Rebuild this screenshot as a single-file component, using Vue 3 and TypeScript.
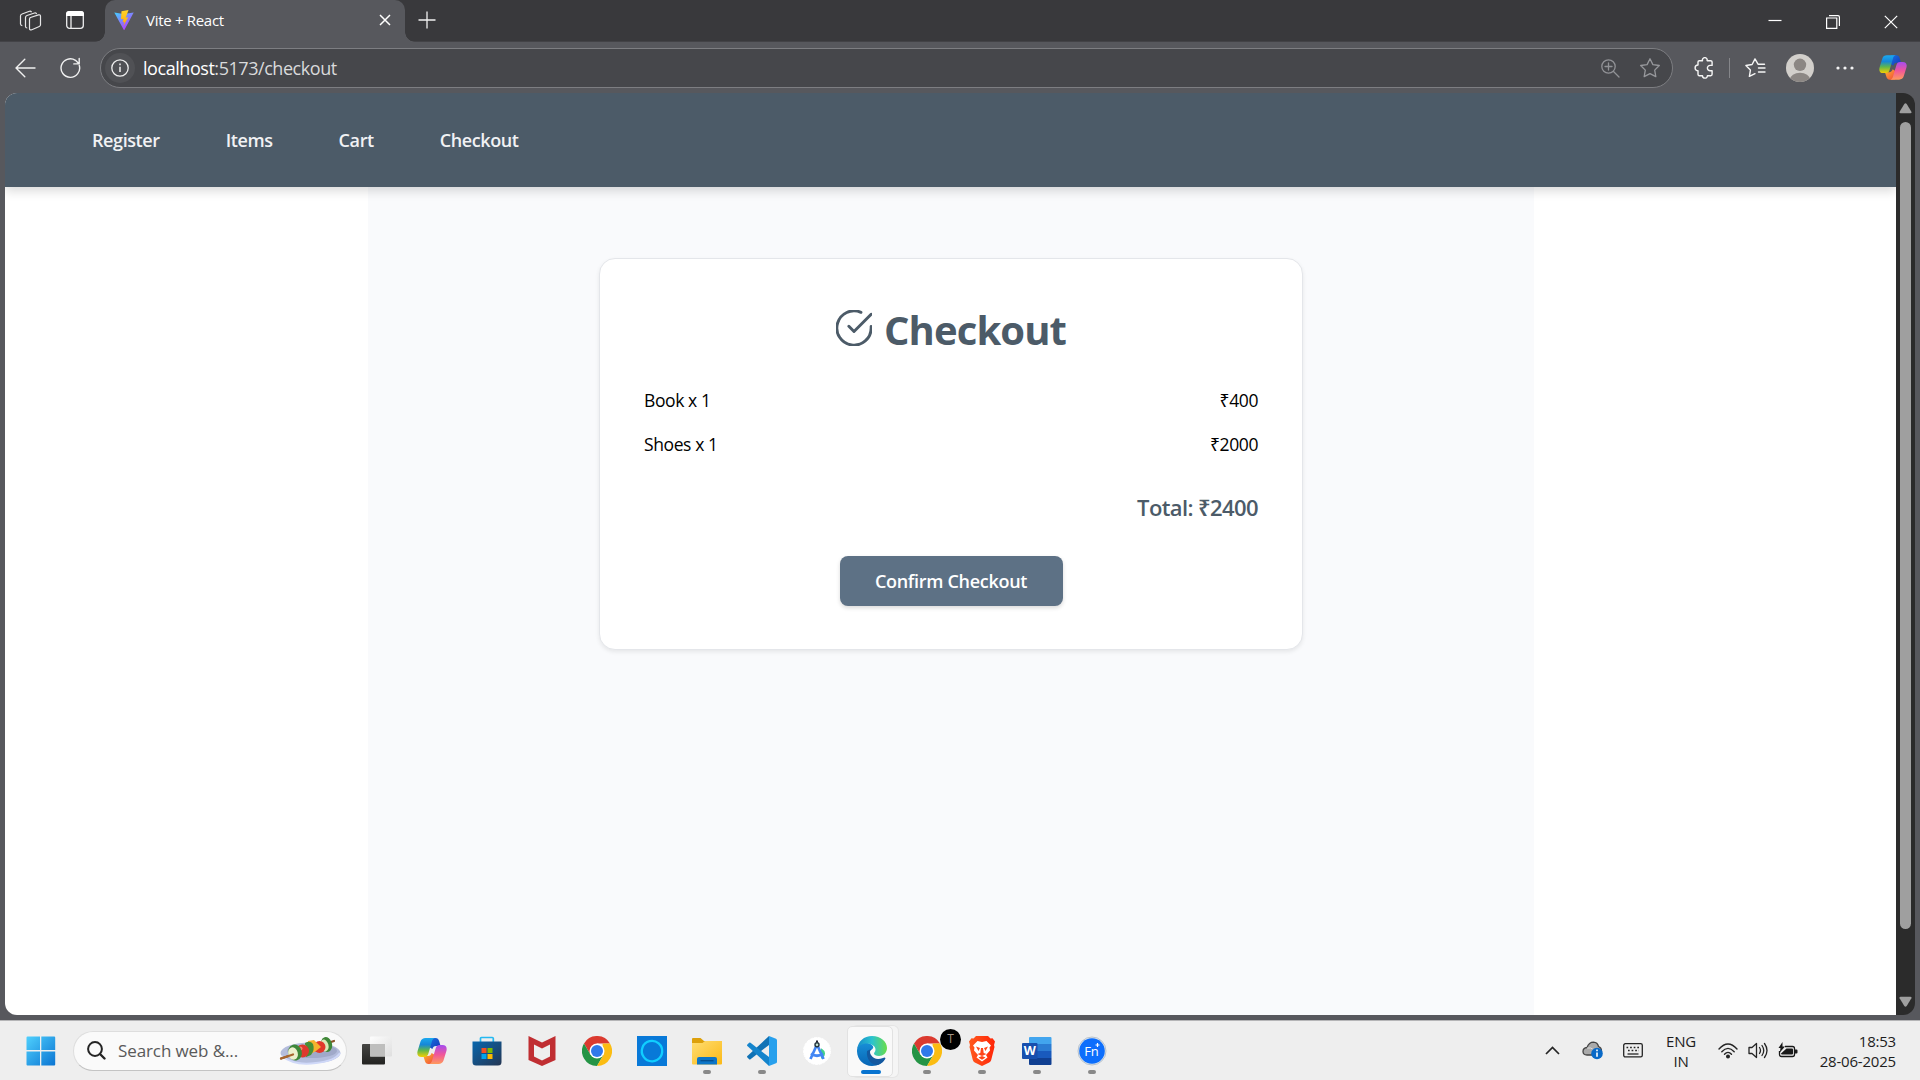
<script setup lang="ts">
interface LineItem {
  name: string
  quantity: number
  price: number
}

const links: string[] = ['Register', 'Items', 'Cart', 'Checkout']
const items: LineItem[] = [
  { name: 'Book', quantity: 1, price: 400 },
  { name: 'Shoes', quantity: 1, price: 2000 },
]
const total = items.reduce((sum, item) => sum + item.price * item.quantity, 0)
</script>

<template>
  <div class="desktop">
    <svg class="defs" width="0" height="0" aria-hidden="true">
      <defs>
        <linearGradient id="cpA" x1="0" y1="0" x2="0" y2="1">
          <stop offset="0" stop-color="#1ba9ef" /><stop offset=".35" stop-color="#1687d8" />
          <stop offset=".65" stop-color="#5fb74c" /><stop offset="1" stop-color="#f6d000" />
        </linearGradient>
        <linearGradient id="cpB" x1="0" y1="0" x2="0" y2="1">
          <stop offset="0" stop-color="#a44cf0" /><stop offset=".5" stop-color="#f0569b" />
          <stop offset="1" stop-color="#ff9a5c" />
        </linearGradient>
        <linearGradient id="cpC" x1="0" y1="0" x2="1" y2="1">
          <stop offset="0" stop-color="#1a6fe0" /><stop offset="1" stop-color="#1438b8" />
        </linearGradient>
        <linearGradient id="cpD" x1="0" y1="0" x2="1" y2="1">
          <stop offset="0" stop-color="#ffb62e" /><stop offset="1" stop-color="#f0453c" />
        </linearGradient>
        <symbol id="copilot" viewBox="0 0 30 28">
          <path fill="url(#cpC)" d="M13 1h5.5c2 0 3 1 3.600 3l1.500 5H19c-2 0-3 1-3.600 3L12 10z" />
          <path fill="url(#cpD)" d="M17 27h-5.500c-2 0-3-1-3.600-3l-1.500-5H11c2 0 3-1 3.600-3l3.400 2z" />
          <path fill="url(#cpA)" d="M8.500 1H18c-1.800.3-2.600 1.700-3.100 3.500l-3.500 12c-.6 2.200-1.800 3.500-4 3.500H4.500C1 20-.3 17.500.6 14L3.500 4.500C4.300 2.200 6 1 8.500 1z" />
          <path fill="url(#cpB)" d="M21.500 27H12c1.800-.3 2.600-1.700 3.100-3.500l3.500-12c.6-2.200 1.800-3.500 4-3.500h2.900c3.500 0 4.800 2.500 3.900 6l-2.900 9.500c-.8 2.300-2.500 3.500-5 3.500z" />
        </symbol>
        <symbol id="chrome" viewBox="0 0 30 30">
          <path fill="#db3a2f" d="M2 7.500A15 15 0 0 1 28 7.500H15L8.500 18.700z" />
          <path fill="#249445" d="M2 7.500A15 15 0 0 0 15 30l6.500-11.200-13 0z" />
          <path fill="#fbbc12" d="M28 7.500A15 15 0 0 1 15 30l6.500-11.200L20.500 7.500z" />
          <circle cx="15" cy="15" r="7.500" fill="#fff" /><circle cx="15" cy="15" r="6" fill="#3079ea" />
        </symbol>
      </defs>
    </svg>

    <header class="browser">
      <div class="tabstrip">
        <svg class="workspaces" width="23" height="22" viewBox="0 0 23 22" fill="none" stroke="#e6e6e7" stroke-width="1.200" stroke-linejoin="round">
          <path d="M11.500 7.500l8-2.600q2-.5 2 1.300v8.600q0 1.200-1.200 1.700l-7.500 3.200q-2.300.8-2.300-1.300V9.200q0-1.300 1-1.700z" />
          <path d="M17.500 4.200q-.3-1.800-2-1.200L8 5.500q-1.500.6-1.500 2v9q.1 1.500 1.800 1.500" />
          <path d="M12.500 2.200Q12 .7 10.500 1.200L3 4Q1.500 4.500 1.500 6v8q.1 1.500 1.800 1.700" />
        </svg>
        <svg class="tab-actions" width="18" height="18" viewBox="0 0 18 18" fill="none" stroke="#eeeeef" stroke-width="1.300">
          <rect x=".7" y=".7" width="16.600" height="16.600" rx="2.800" /><path fill="#fff" stroke="none" d="M0 5V3Q0 0 3 0h12q3 0 3 3v2z" /><path d="M5 5v12" />
        </svg>
        <div class="tab">
          <svg width="20" height="20" viewBox="0 0 20 20">
            <defs>
              <linearGradient id="viteA" x1="0" y1="0" x2=".7" y2="1"><stop offset="0" stop-color="#41d1ff" /><stop offset="1" stop-color="#bd34fe" /></linearGradient>
              <linearGradient id="viteB" x1="0" y1="0" x2="0" y2="1"><stop offset="0" stop-color="#ffd42e" /><stop offset="1" stop-color="#ffa800" /></linearGradient>
            </defs>
            <path fill="url(#viteA)" d="M.3 2.500L9.500 4l10.200-1.500L10.500 19.700q-.4.500-.8 0z" />
            <path fill="url(#viteB)" d="M14.500 0L7.500 1.300 7 9.200l2.400-.5-.7 3.600 1.700-.5-1 4.200 4.800-8.700-2.500.4z" />
          </svg>
          <span class="tab-title">Vite + React</span>
          <svg class="tab-close" width="12" height="12" viewBox="0 0 12 12" stroke="#fff" stroke-width="1.500"><path d="M1 1l10 10M11 1L1 11" /></svg>
        </div>
        <svg class="new-tab" width="18" height="18" viewBox="0 0 18 18" stroke="#f1f1f1" stroke-width="1.300"><path d="M9 .5v17M.5 9h17" /></svg>
        <div class="window-controls">
          <svg viewBox="0 0 14 14"><path d="M.5 5.500h13" /></svg>
          <svg viewBox="0 0 14 14"><path d="M.6 3h10.200v10.400H.6zM3 .6h9q1.400 0 1.400 1.400v9" /></svg>
          <svg viewBox="0 0 14 14"><path d="M.8.800l12.400 12.400M13.200.800L.8 13.200" /></svg>
        </div>
      </div>

      <div class="toolbar">
        <svg class="back" width="21" height="20" viewBox="0 0 21 20" fill="none" stroke="#f0f0f0" stroke-width="1.400" stroke-linecap="round" stroke-linejoin="round"><path d="M20 10H1.200M9.800 1.300L1 10l8.800 8.700" /></svg>
        <svg class="reload" width="21" height="22" viewBox="0 0 21 22" fill="none" stroke="#f0f0f0" stroke-width="1.400" stroke-linecap="round" stroke-linejoin="round"><path d="M19.300 8.500A9.300 9.300 0 1 1 15.500 3.300L19 6.700M19.200 1.500v5.400h-5.400" /></svg>
        <div class="address">
          <span class="site-info">
            <svg width="18" height="18" viewBox="0 0 18 18" fill="none" stroke="#eee" stroke-width="1.300"><circle cx="9" cy="9" r="8.200" /><path stroke-width="1.500" d="M9 7.700v5.300M9 4.600v1.600" /></svg>
          </span>
          <span class="url"><b>localhost</b>:5173/checkout</span>
          <svg class="zoom-icon" width="19" height="19" viewBox="0 0 19 19" fill="none" stroke="#919296" stroke-width="1.300" stroke-linecap="round"><circle cx="7.500" cy="7.500" r="6.700" /><path d="M12.500 12.500l5.500 5.500M7.500 4v7M4 7.500h7" /></svg>
          <svg class="star" width="20" height="20" viewBox="0 0 20 20" fill="none" stroke="#97989c" stroke-width="1.300" stroke-linejoin="round"><path d="M10 .8l2.900 5.800 6.400.9-4.600 4.600 1.100 6.500L10 15.600l-5.800 3 1.100-6.500L.7 7.500l6.400-.9z" /></svg>
        </div>
        <svg class="puzzle" width="20" height="22" viewBox="0 0 20 22" fill="none" stroke="#f5f5f5" stroke-width="1.400" stroke-linejoin="round"><path d="M4 8V5q0-1.300 1.300-1.300h3.200a2.400 2.400 0 1 1 4.600 0h3.600q1.400 0 1.400 1.400v3.300h-1.500a2.700 2.700 0 1 0 0 5.300h1.500v3.600q0 1.400-1.400 1.400h-3.300a2.400 2.400 0 1 1-4.900 0H5.300Q4 18.700 4 17.300v-3.500a2.900 2.900 0 1 1 0-5.800z" /></svg>
        <i class="divider"></i>
        <svg class="favorites" width="21" height="20" viewBox="0 0 21 20" fill="none" stroke="#f5f5f5" stroke-width="1.400" stroke-linecap="round" stroke-linejoin="round"><path d="M19.500 6.200H13L10 .9 7.100 6.500.9 7.500l4.500 4.600-1 6.300 5.600-2.700M13.500 10h6.500M13.500 14h6.500" /></svg>
        <svg class="avatar" width="28" height="28" viewBox="0 0 28 28"><defs><clipPath id="face"><circle cx="14" cy="14" r="14" /></clipPath></defs><g clip-path="url(#face)"><path fill="#d2cfcb" d="M0 0h28v28H0z" /><circle cx="14" cy="10.800" r="6.200" fill="#8c8784" /><ellipse cx="14" cy="25.500" rx="10" ry="6.800" fill="#8c8784" /></g></svg>
        <svg class="dots" width="18" height="4" viewBox="0 0 18 4" fill="#f4f4f4"><circle cx="2" cy="2" r="1.600" /><circle cx="9" cy="2" r="1.600" /><circle cx="16" cy="2" r="1.600" /></svg>
        <svg class="copilot-button" width="28" height="27"><use href="#copilot" /></svg>
      </div>
    </header>

    <main class="frame">
      <div class="viewport">
        <nav class="nav">
          <a v-for="link in links" :key="link">{{ link }}</a>
        </nav>
        <div class="container">
          <section class="card">
            <h1>
              <svg width="36" height="36" viewBox="1.500 1.500 21 21" fill="none" stroke="currentColor" stroke-width="1.700" stroke-linecap="round" stroke-linejoin="round"><path d="M22 11.080V12a10 10 0 1 1-5.930-9.140" /><path d="M22 4L12 14.010l-3-3" /></svg>
              <span>Checkout</span>
            </h1>
            <ul>
              <li v-for="item in items" :key="item.name">
                <span>{{ item.name }} x {{ item.quantity }}</span>
                <span class="price">₹{{ item.price * item.quantity }}</span>
              </li>
            </ul>
            <p class="total">Total: ₹{{ total }}</p>
            <button type="button">Confirm Checkout</button>
          </section>
        </div>
      </div>
      <div class="scrollbar">
        <svg width="13" height="11" viewBox="0 0 13 11"><path d="M5.300.9q1.200-1.300 2.400 0l4.700 7.800q.6 1.500-1 1.500H1.600q-1.600 0-1-1.500z" /></svg>
        <i></i>
        <svg width="13" height="11" viewBox="0 0 13 11"><path d="M5.300 10.100q1.200 1.300 2.400 0l4.700-7.800q.6-1.500-1-1.500H1.600q-1.600 0-1 1.500z" /></svg>
      </div>
    </main>

    <footer class="taskbar">
      <svg class="start" width="30" height="30" viewBox="0 0 30 30">
        <defs><linearGradient id="win" x1="0" y1="0" x2="1" y2="1" gradientUnits="objectBoundingBox"><stop offset="0" stop-color="#4fd0fd" /><stop offset="1" stop-color="#0a74d2" /></linearGradient></defs>
        <path fill="url(#win)" d="M.5 1.500q0-1 1-1H14V14H.5zM15.300.500h12.900q1 0 1 1V14H15.300zM.5 15.500H14v14H1.500q-1 0-1-1zM15.300 15.500h13.900v13q0 1-1 1H15.300z" />
      </svg>
      <div class="search">
        <svg width="19" height="19" viewBox="0 0 19 19" fill="none" stroke="#252525" stroke-width="2"><circle cx="8" cy="8" r="6.900" /><path stroke-width="2.400" stroke-linecap="round" d="M13 13l4.500 4.500" /></svg>
        <span>Search web &amp;...</span>
        <svg class="skewer" width="62" height="30" viewBox="0 0 62 30">
          <ellipse cx="31.500" cy="17" rx="30" ry="10.500" fill="#b4bddc" /><ellipse cx="33" cy="15" rx="25" ry="7" fill="#a0a9c9" /><path d="M3 20q12 10 34 7 19-2 24-10" fill="none" stroke="#cfd8f8" stroke-width="2" />
          <path d="M2 22.500L55 5" stroke="#8c5328" stroke-width="2.200" stroke-linecap="round" />
          <ellipse cx="47.500" cy="8.500" rx="5.500" ry="7.500" transform="rotate(-15 47.500 8.500)" fill="#3f8738" /><ellipse cx="45.500" cy="9.500" rx="4" ry="6" transform="rotate(-15 45.500 9.500)" fill="#dde8b7" />
          <circle cx="40.500" cy="11" r="6" fill="#e2382b" />
          <path d="M29 5l6-1 7 7-5 4-7 4z" fill="#f6b22d" /><path d="M26 7q5-3 8 1 2 6-2 11l-5 2z" fill="#468f36" /><path d="M26 9q4 4 1 10l-4 1z" fill="#e6e4aa" />
          <circle cx="23.500" cy="15" r="6.500" fill="#de392d" /><circle cx="21.500" cy="12.500" r="2" fill="#f3836f" />
          <ellipse cx="16" cy="16.500" rx="6.800" ry="8" transform="rotate(-15 16 16.500)" fill="#3e8839" /><ellipse cx="14" cy="17.500" rx="4.800" ry="6.300" transform="rotate(-15 14 17.500)" fill="#edf0cd" />
          <path d="M2 22.500L14 18.500" stroke="#a8662f" stroke-width="2.200" stroke-linecap="round" />
        </svg>
      </div>

      <div class="apps">
        <span class="app">
          <svg width="30" height="30" viewBox="0 0 30 30"><defs><linearGradient id="tvA" x2="0" y2="1"><stop stop-color="#454543" /><stop offset="1" stop-color="#222220" /></linearGradient><linearGradient id="tvB" x2="1" y2="1"><stop stop-color="#fff" stop-opacity=".9" /><stop offset="1" stop-color="#ddd" stop-opacity=".9" /></linearGradient></defs><rect y="8" width="23" height="20.500" rx="1" fill="url(#tvA)" /><rect x="8" y=".5" width="22" height="20" rx="1" fill="url(#tvB)" /><path fill="#bebebd" d="M8 8h15v12.500H8z" /></svg>
        </span>
        <span class="app"><svg width="30" height="28"><use href="#copilot" /></svg></span>
        <span class="app">
          <svg width="30" height="30" viewBox="0 0 30 30"><defs><linearGradient id="store" x1="0" y1="0" x2="1" y2="1"><stop stop-color="#0867ae" /><stop offset="1" stop-color="#253653" /></linearGradient></defs><path fill="none" stroke="#25b9f1" stroke-width="1.700" d="M8.500 6V2.500q0-1 1-1h10.800q1 0 1 1V6" /><path fill="url(#store)" d="M.5 5.500h29V26q0 3.500-3.500 3.500H4Q.5 29.500.5 26z" /><path fill="#f25022" d="M9.500 12h5v5h-5z" /><path fill="#7fba00" d="M15.500 12h5v5h-5z" /><path fill="#00a4ef" d="M9.500 18h5v5h-5z" /><path fill="#ffb900" d="M15.500 18h5v5h-5z" /></svg>
        </span>
        <span class="app"><svg width="30" height="30" viewBox="0 0 30 30"><path fill="#c02e32" fill-rule="evenodd" d="M1.500 0L15 6.500 28.500 0v24L15 30 1.500 24zM7 8.500v12L15 24.500l8-4v-12l-8 4z" /></svg></span>
        <span class="app"><svg width="30" height="30"><use href="#chrome" /></svg></span>
        <span class="app"><svg width="30" height="30" viewBox="0 0 30 30"><path fill="#0879d8" d="M0 0h30v30H0z" /><path d="M15 25.300a10.200 10.200 0 1 1 5-1.300q-2.500 1.500-5 1.300z" fill="none" stroke="#10ceff" stroke-width="2.300" /></svg></span>
        <span class="app running">
          <svg width="30" height="30" viewBox="0 0 30 30"><defs><linearGradient id="fold" x2="1" y2="1"><stop stop-color="#ffdd72" /><stop offset="1" stop-color="#fbb916" /></linearGradient></defs><path fill="#dda00b" d="M0 10V3q0-1 1-1h7.500l3.500 3h17q1 0 1 1v4z" /><path fill="url(#fold)" d="M0 7h10.500l2.500-2H30v22.500q0 1-1 1H1q-1 0-1-1z" /><path fill="#0c75c7" d="M5 28.500V23q0-2 2-2h16q2 0 2 2v5.500z" /><path stroke="#064d8e" stroke-width="1.300" d="M8.500 24.700h13" /></svg>
        </span>
        <span class="app running">
          <svg width="30" height="30" viewBox="0 0 30 30"><path fill="#1072b5" d="M22 0v9L3.500 23.200q-.7.500-1.400 0L.4 21.600q-.8-.8 0-1.600z" /><path fill="#1484cc" d="M22 30v-9L3.500 6.800q-.7-.5-1.400 0L.4 8.400q-.8.800 0 1.600z" /><path fill="#27a0ed" d="M22 0l7 2.800q1 .5 1 1.500v21.400q0 1-1 1.500L22 30z" /></svg>
        </span>
        <span class="app">
          <svg width="30" height="30" viewBox="0 0 30 30"><circle cx="15" cy="15" r="13.500" fill="#fff" stroke="#fff" stroke-dasharray="3 1" /><path d="M20 14a4 4 0 0 1 0 7z" fill="#42d18a" stroke="#42d18a" stroke-width="2" /><path d="M15 8.500L8.500 23M15 8.500L21.500 23M9 17.500q6 4.500 12 0" fill="none" stroke="#4286f4" stroke-width="2.700" /><path d="M15 4.500v2" stroke="#223" stroke-width="2" /><circle cx="15" cy="8.800" r="2" fill="#c8e6d5" stroke="#24333d" stroke-width="1.400" /></svg>
        </span>
        <span class="app active">
          <svg width="30" height="30" viewBox="0 0 30 30"><defs><linearGradient id="edA" x1="0" y1=".5" x2="1" y2=".5"><stop stop-color="#168acb" /><stop offset=".5" stop-color="#2bc3cf" /><stop offset="1" stop-color="#69dd49" /></linearGradient><linearGradient id="edB" x2="0" y2="1"><stop stop-color="#188fd7" /><stop offset="1" stop-color="#0865b5" /></linearGradient></defs><path fill="url(#edB)" d="M0 14C1 6 10 5 15 9c3 3 0 4-2 6-2 4 0 9 5 10 4 1 7 0 10-3-2 5-7 8-13 8C6 30-.4 23 0 14z" /><path fill="url(#edA)" d="M0 14C1 5 7 0 15 0c9 0 15 6 15 12 0 5-4 8-8 8-3 0-5-1-5-2.500 0-1 1.500-1.500 1.500-4C18.500 10 14 7.500 10 7.500 5 7.500 1 10 0 14z" /><path fill="#1459a0" d="M10 15c-1 8 4 14 11 14q5-2 7.500-6.500Q28 21 26 22q-8 3-12-3-2-3 0-6z" /></svg>
        </span>
        <span class="app running profile">
          <svg width="30" height="30"><use href="#chrome" /></svg><b>T</b>
        </span>
        <span class="app running">
          <svg width="26" height="30" viewBox="0 0 26 30"><defs><linearGradient id="brave" x2="1"><stop stop-color="#ff5a1e" /><stop offset="1" stop-color="#ff2508" /></linearGradient></defs><path fill="url(#brave)" d="M7 0h12l2.500 2.500 2-.3L26 5.500 25 9l.5 2-3.300 13q-.5 1.500-2 2.500L13 30l-7.200-3.500q-1.500-1-2-2.500L.5 11 1 9 0 5.500l2.500-3.300 2 .3z" /><path fill="#fff" d="M8.500 5l4.500 1 4.500-1L22 9.500l-1.500 2 .5 3-4 4.500 1.500 2.500L13 25.500 7.500 21.500 9 19l-4-4.500.5-3L4 9.500z" /><path fill="#ff451a" d="M7 10.500l4 1.500-1.500 3zM19 10.500L15 12l1.500 3zM12 12h2l.7 5 2.800 1-4.500 2-4.500-2 2.800-1zM9.500 21.500L13 20l3.500 1.500L13 23.700z" /></svg>
        </span>
        <span class="app running">
          <svg width="30" height="30" viewBox="0 0 30 30"><path fill="#42a5ee" d="M8 1h20.500q1 0 1 1v6H7V2q0-1 1-1z" /><path fill="#2b7cd3" d="M7 8h22.500v7H7z" /><path fill="#195abd" d="M7 15h22.500v7H7z" /><path fill="#103f91" d="M7 22h22.500v6q0 1-1 1H8q-1 0-1-1z" /><rect y="7" width="15.500" height="16" rx="1" fill="#174fae" /><text x="7.700" y="19.300" text-anchor="middle" fill="#fff" font-size="12.500" font-weight="700">W</text></svg>
        </span>
        <span class="app running">
          <svg width="30" height="30" viewBox="0 0 30 30"><circle cx="15" cy="15" r="14" fill="#dae5ef" stroke="#b9c2cc" /><circle cx="15" cy="15" r="12.800" fill="#0d6efc" /><text x="14.500" y="20" text-anchor="middle" fill="#fff" font-size="13">Fn</text><path stroke="#fff" stroke-width="1.200" d="M20.500 7v4M18.500 9h4" /></svg>
        </span>
      </div>

      <div class="tray">
        <svg class="chevron" width="15" height="9" viewBox="0 0 15 9" fill="none" stroke="#252525" stroke-width="1.700"><path d="M1 8l6.500-6.500L14 8" /></svg>
        <svg class="cloud" width="21" height="19" viewBox="0 0 21 19"><path fill="#aaa" stroke="#444" stroke-width="1.300" d="M5 14Q1 14 1 10.500 1 7 5 6.500 7 1.200 11.500 1.200q4 .3 5 4.300 3 1 3 4.500l-9 4z" /><path d="M5 7q4-1 7 2" fill="none" stroke="#ddd" /><circle cx="15" cy="12.500" r="5.800" fill="#0969c7" /><path stroke="#fff" stroke-width="1.600" d="M15 11.500v4.300M15 8.500v1.700" /></svg>
        <svg class="keyboard" width="20" height="15" viewBox="0 0 20 15" fill="none" stroke="#242424" stroke-width="1.300"><rect x=".7" y=".7" width="18.600" height="13.200" rx="1.600" /><path stroke-width="1.600" stroke-dasharray="1.700 1.900" d="M3.500 4.500H17M5 7.500h11" /><path d="M4.500 11h11" /></svg>
        <span class="lang">ENG<br />IN</span>
        <svg class="wifi" width="20" height="16" viewBox="0 0 20 16" fill="none" stroke="#242424" stroke-width="1.400" stroke-linecap="round"><path d="M1 6Q10-4 19 6M3.800 8.800q6.200-6.800 12.400 0M6.500 11.300q3.500-3.800 7 0" /><circle cx="10" cy="13.500" r="1.300" fill="#242424" /></svg>
        <svg class="volume" width="20" height="17" viewBox="0 0 20 17" fill="none" stroke="#242424" stroke-width="1.300" stroke-linecap="round" stroke-linejoin="round"><path d="M1 5.500h3L8.500 1.500v14L4 11.500H1zM11.500 5.500q2 3 0 6M14 3.500q3.500 5 0 10M16.500 1.500q5 7 0 14" /></svg>
        <svg class="battery" width="20" height="17" viewBox="0 0 20 17"><path fill="none" stroke="#181818" stroke-width="1.300" d="M7 4.500h7.500q2 0 2 2v6q0 2-2 2h-11q-2 0-2-2V9" /><path fill="#181818" d="M17 7.500h1.500q1 0 1 1v2q0 1-1 1H17zM8.500 6.500H14q1 0 1 1v4q0 1-1 1H4q-1 0-1-1zM4.500 0L.5 6h2L1.800 10.500 7 4.500H4.500z" /></svg>
        <time>18:53<br />28-06-2025</time>
      </div>
    </footer>
  </div>
</template>

<style>
body {
  margin: 0;
  overflow: hidden;
}
</style>

<style scoped>
* {
  box-sizing: border-box;
}
.desktop {
  width: 1920px;
  height: 1080px;
  display: flex;
  flex-direction: column;
  overflow: hidden;
  font-family: 'Open Sans', 'Noto Sans', sans-serif;
  background: #57585d;
}
.defs {
  position: absolute;
}
svg {
  flex: none;
  display: block;
}
.browser {
  height: 93px;
  color: #fff;
}
.tabstrip {
  display: flex;
  height: 42px;
  background: #39393c;
  box-shadow: inset 0 -1px #434347;
}
.workspaces {
  margin: 10px 0 0 19px;
}
.tab-actions {
  margin: 11px 0 0 24px;
}
.tab {
  position: relative;
  display: flex;
  width: 300px;
  height: 42px;
  margin-left: 21px;
  padding: 10px 14px 0 9px;
  border-radius: 10px 10px 0 0;
  background: #57585d;
}
.tab::before,
.tab::after {
  content: '';
  position: absolute;
  bottom: 0;
  width: 10px;
  height: 10px;
}
.tab::before {
  right: 100%;
  background: radial-gradient(circle at 0 0, transparent 9.5px, #57585d 10px);
}
.tab::after {
  left: 100%;
  background: radial-gradient(circle at 100% 0, transparent 9.5px, #57585d 10px);
}
.tab-title {
  margin-left: 12px;
  line-height: 20px;
  font-size: 15px;
  letter-spacing: -0.3px;
}
.tab-close {
  margin: 4px 0 0 auto;
}
.new-tab {
  margin: 11px 0 0 13px;
}
.window-controls {
  display: flex;
  margin: 15px 22px 0 auto;
  gap: 44px;
}
.window-controls svg {
  width: 14px;
  height: 14px;
  fill: none;
  stroke: #fff;
  stroke-width: 1.200;
}
.toolbar {
  display: flex;
  align-items: center;
  height: 51px;
}
.back {
  margin-left: 15px;
}
.reload {
  margin-left: 24px;
}
.address {
  display: flex;
  align-items: center;
  width: 1573px;
  height: 40px;
  margin: 1px 0 0 19px;
  padding: 0 12px 0 4px;
  border: 1px solid #7d7e82;
  border-radius: 20px;
  background: #46474b;
}
.site-info {
  display: flex;
  align-items: center;
  justify-content: center;
  width: 30px;
  height: 30px;
  border-radius: 50%;
  background: #505155;
}
.url {
  margin-left: 8px;
  font-size: 18px;
  line-height: 24px;
  letter-spacing: -0.45px;
  color: #d9dadb;
}
.url b {
  font-weight: 400;
  color: #fff;
}
.zoom-icon {
  margin-left: auto;
}
.star {
  margin-left: 20px;
}
.puzzle {
  margin-left: 21px;
}
.divider {
  width: 1px;
  height: 20px;
  margin-left: 15px;
  background: #85868a;
}
.favorites {
  margin-left: 15px;
}
.avatar {
  margin-left: 20px;
}
.dots {
  margin-left: 22px;
}
.copilot-button {
  margin-left: 25px;
}
.frame {
  display: flex;
  height: 922px;
  margin: 0 5px;
  border-radius: 12px;
  overflow: hidden;
}
.viewport {
  display: flex;
  flex-direction: column;
  width: 1891px;
  background: #fff;
  overflow: hidden;
}
.nav {
  position: relative;
  display: flex;
  align-items: center;
  flex: none;
  gap: 66px;
  height: 94px;
  padding-left: 87px;
  background: #4c5b68;
  box-shadow: 0 4px 10px rgba(0, 0, 0, 0.15);
}
.nav a {
  color: #f1f2f4;
  font-size: 18px;
  font-weight: 600;
  line-height: 24px;
  letter-spacing: -0.4px;
}
.container {
  flex: 1;
  width: 1166px;
  margin-left: 363px;
  padding-top: 71px;
  background: #f9fafc;
}
.card {
  display: flex;
  flex-direction: column;
  width: 704px;
  height: 392px;
  margin: 0 auto;
  padding: 47px 44px 0;
  border: 1px solid #e4e6ea;
  border-radius: 16px;
  background: #fff;
  box-shadow: 0 2px 4px rgba(0, 0, 0, 0.08);
}
h1 {
  display: flex;
  align-items: center;
  justify-content: center;
  gap: 12px;
  height: 48px;
  margin: 0;
  color: #4c5b68;
  font-size: 40px;
  font-weight: 700;
  line-height: 48px;
  letter-spacing: -0.9px;
}
h1 svg {
  margin-top: -4px;
}
ul {
  display: flex;
  flex-direction: column;
  gap: 20px;
  margin: 34px 0 0;
  padding: 0;
  list-style: none;
}
li {
  display: flex;
  justify-content: space-between;
  height: 24px;
  font-size: 17.5px;
  line-height: 24px;
  letter-spacing: -0.4px;
  color: #000;
}
.total {
  margin: 36px 0 0;
  text-align: right;
  color: #4c5b68;
  font-size: 22px;
  font-weight: 600;
  line-height: 30px;
  letter-spacing: -0.6px;
}
button {
  align-self: center;
  width: 223px;
  height: 50px;
  margin-top: 34px;
  padding: 0;
  border: 0;
  border-radius: 8px;
  color: #fff;
  background: #5d7185;
  box-shadow: 0 2px 4px rgba(0, 0, 0, 0.15);
  font: 600 18px/50px 'Open Sans', 'Noto Sans', sans-serif;
  letter-spacing: -0.3px;
}
.scrollbar {
  display: flex;
  flex-direction: column;
  align-items: center;
  justify-content: space-between;
  width: 19px;
  padding: 10px 0 8px;
  background: #2b2b2b;
}
.scrollbar svg {
  fill: #9f9f9f;
}
.scrollbar i {
  width: 11px;
  height: 807px;
  margin-bottom: 60px;
  border-radius: 6px;
  background: #9f9f9f;
}
.taskbar {
  display: flex;
  align-items: center;
  height: 60px;
  margin-top: 5px;
  border-top: 1px solid #b5b5b7;
  background: #eeeeee;
}
.start {
  margin-left: 26px;
}
.search {
  display: flex;
  align-items: center;
  width: 274px;
  height: 40px;
  margin-left: 17px;
  padding: 0 5px 0 13px;
  border: 1px solid #dedede;
  border-bottom-color: #c4c4c4;
  border-radius: 20px;
  background: #fafafa;
}
.search span {
  margin-left: 12px;
  color: #595959;
  font-size: 17px;
  letter-spacing: -0.1px;
}
.skewer {
  margin-left: auto;
}
.apps {
  display: flex;
  height: 59px;
  margin-left: 2px;
}
.app {
  position: relative;
  display: flex;
  align-items: center;
  justify-content: center;
  width: 55px;
  height: 59px;
}
.app svg {
  position: relative;
}
.app.running::after,
.app.active::after {
  content: '';
  position: absolute;
  bottom: 6px;
  left: 24px;
  width: 8px;
  height: 4px;
  border-radius: 2px;
  background: #888;
}
.app.active::after {
  left: 17px;
  width: 20px;
  background: #0873d0;
}
.app.active::before {
  content: '';
  position: absolute;
  top: 5px;
  left: 3px;
  width: 44px;
  height: 49px;
  border: 1px solid #e2e2e2;
  border-radius: 5px;
  background: #f9f9f9;
  box-shadow: 5px 0 #f5f5f5, 5px 0 0 1px #e5e5e5;
}
.profile b {
  position: absolute;
  top: 8px;
  right: -7px;
  width: 21px;
  height: 21px;
  border-radius: 50%;
  background: #000;
  color: #a29484;
  font-size: 12px;
  font-weight: 400;
  line-height: 20px;
  text-align: center;
}
.tray {
  display: flex;
  align-items: center;
  margin: 0 24px 0 auto;
  color: #1d1d1d;
  font-size: 15px;
  line-height: 20px;
  letter-spacing: -0.2px;
}
.cloud {
  margin-left: 22px;
}
.keyboard {
  margin-left: 20px;
}
.lang {
  width: 40px;
  margin-left: 18px;
  text-align: center;
}
.wifi {
  margin-left: 17px;
}
.volume {
  margin-left: 10px;
}
.battery {
  margin-left: 10px;
}
time {
  width: 88px;
  margin-left: 10px;
  text-align: right;
}
</style>
